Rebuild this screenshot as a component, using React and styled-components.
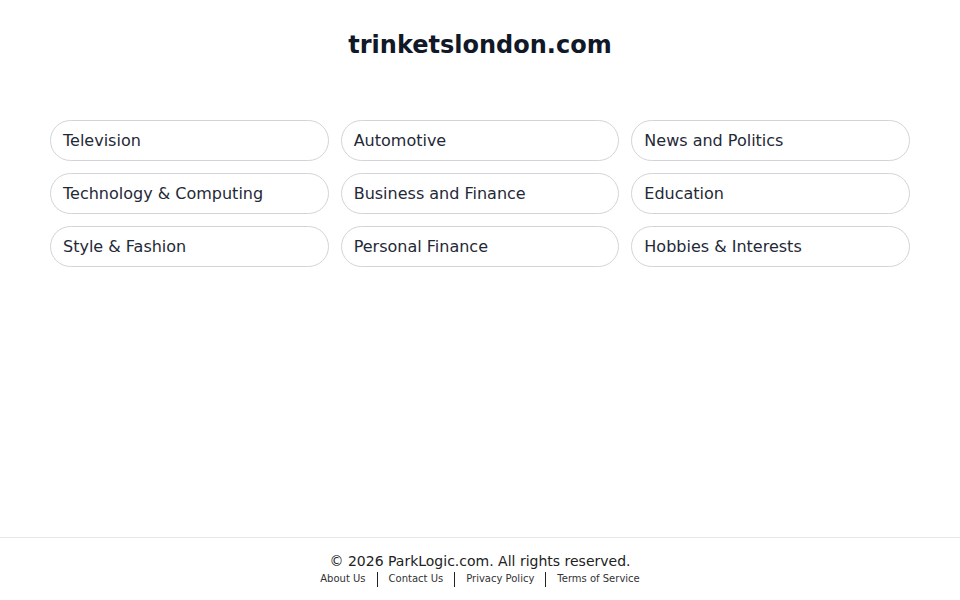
import React from 'react';
import styled, { createGlobalStyle } from 'styled-components';

const GlobalStyle = createGlobalStyle`
  html, body {
    margin: 0;
    padding: 0;
    background: #ffffff;
    font-family: "DejaVu Sans", "Liberation Sans", sans-serif;
  }
`;

const Page = styled.div`
  min-height: 100vh;
  display: flex;
  flex-direction: column;
`;

const Main = styled.main`
  flex: 1;
  padding: 31px 50px 0;
`;

const Title = styled.h1`
  margin: 0;
  text-align: center;
  font-size: 24px;
  line-height: 28px;
  font-weight: 700;
  color: #111827;
`;

const Grid = styled.div`
  margin-top: 61px;
  display: grid;
  grid-template-columns: repeat(3, 1fr);
  gap: 12px;
`;

const Pill = styled.a`
  display: block;
  border: 1px solid #d4d4d8;
  border-radius: 9999px;
  padding: 10px 12px;
  font-size: 16px;
  line-height: 19px;
  color: #1f2937;
  text-decoration: none;
`;

const Footer = styled.footer`
  border-top: 1px solid #e5e7eb;
  padding: 14px 0 13px;
  text-align: center;
`;

const Copyright = styled.div`
  font-size: 14px;
  line-height: 18px;
  color: #222222;
`;

const Links = styled.nav`
  display: flex;
  justify-content: center;
  align-items: center;
  margin-top: 1px;
`;

const FooterLink = styled.a`
  font-size: 10px;
  line-height: 16px;
  color: #333333;
  text-decoration: none;
`;

const Sep = styled.span`
  width: 0;
  height: 15px;
  border-left: 1.5px solid #222222;
  margin: 0 11px;
`;

const categories = [
  'Television',
  'Automotive',
  'News and Politics',
  'Technology & Computing',
  'Business and Finance',
  'Education',
  'Style & Fashion',
  'Personal Finance',
  'Hobbies & Interests',
];

const footerLinks = ['About Us', 'Contact Us', 'Privacy Policy', 'Terms of Service'];

export default function App() {
  return (
    <Page>
      <GlobalStyle />
      <Main>
        <Title>trinketslondon.com</Title>
        <Grid>
          {categories.map((c) => (
            <Pill key={c} href="#">{c}</Pill>
          ))}
        </Grid>
      </Main>
      <Footer>
        <Copyright>© 2026 ParkLogic.com. All rights reserved.</Copyright>
        <Links>
          {footerLinks.map((l, i) => (
            <React.Fragment key={l}>
              {i > 0 && <Sep />}
              <FooterLink href="#">{l}</FooterLink>
            </React.Fragment>
          ))}
        </Links>
      </Footer>
    </Page>
  );
}
